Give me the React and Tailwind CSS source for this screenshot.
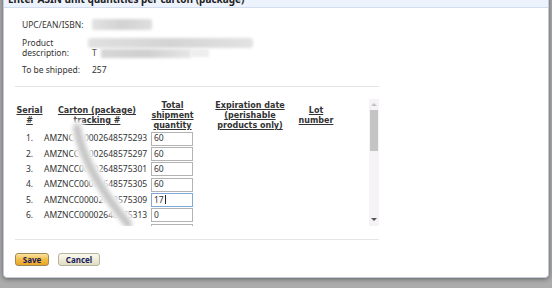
import React from 'react';

const rows = [
    { n: '1.', id: 'AMZNCC00002648575293', qty: '60' },
    { n: '2.', id: 'AMZNCC00002648575297', qty: '60' },
    { n: '3.', id: 'AMZNCC00002648575301', qty: '60' },
    { n: '4.', id: 'AMZNCC00002648575305', qty: '60' },
    { n: '5.', id: 'AMZNCC00002648575309', qty: '17', focused: true },
    { n: '6.', id: 'AMZNCC00002648575313', qty: '0' },
    // only the top edge of row 7's input shows above the fold
    { n: '', id: '', qty: '' },
];

function HeadCell({ width, children }) {
    return (
        <div className={`flex justify-center ${width}`}>
            <span className="whitespace-nowrap text-center underline">{children}</span>
        </div>
    );
}

export default function App() {
    return (
        <div className="h-[288px] w-[552px] overflow-hidden bg-[#acacac] font-['Noto_Sans',sans-serif] text-[8.5px] text-[#333]">
            <div className="ml-[3px] mt-[-17px] w-[546px] rounded-b-[4px] border border-[#c3cbd6] bg-white shadow-[0_1px_5px_rgba(0,0,0,0.45)]">
                {/* Title bar (mostly scrolled off the top) */}
                <div className="h-[24px] border-b border-[#d2def0] bg-[#edf3fc] pl-[4px] pt-[10px] text-[10px] font-bold leading-[11px] text-[#222]">
                    Enter ASIN unit quantities per carton (package)
                </div>

                <div className="pl-[11px] pt-[12px] pb-[11px]">
                    {/* Product info */}
                    <div className="pl-[7px] leading-[10px]">
                        <div className="flex h-[10px]">
                            <div className="w-[70px]">UPC/EAN/ISBN:</div>
                            <div className="mt-[-1px] h-[11px] w-[60px] rounded-[2px] bg-gradient-to-r from-[#e2e2e2] via-[#d2d2d2] to-[#dedede] blur-[1.5px]" />
                        </div>
                        <div className="mt-[8px] flex h-[20px]">
                            <div className="w-[70px]">Product<br />description:</div>
                            <div className="ml-[-4px] flex flex-col">
                                <div className="h-[10px] w-[165px] rounded-[3px] bg-gradient-to-r from-[#e0e0e0] via-[#d4d4d4] to-[#e2e2e2] blur-[1.5px]" />
                                <div className="flex h-[10px] items-center">
                                    <span className="ml-[4px] mr-[4px] text-[#444]">T</span>
                                    <div className="h-[9px] w-[90px] bg-gradient-to-r from-[#d6d6d6] via-[#cfcfcf] to-[#e6e6e6] blur-[1.5px]" />
                                    <div className="h-[8px] w-[18px] bg-[#eeeeee] blur-[1px]" />
                                </div>
                            </div>
                        </div>
                        <div className="mt-[7px] flex h-[10px]">
                            <div className="w-[70px]">To be shipped:</div>
                            <div>257</div>
                        </div>
                    </div>

                    <div className="mt-[11px] h-px w-[364px] bg-[#e3e3e3]" />

                    {/* Carton table */}
                    <div className="relative mt-[12px] flex h-[127px] w-[364px]">
                        <div className="w-[354px] overflow-hidden pt-[2px]">
                            <div className="flex h-[30px] items-center font-['DejaVu_Sans',sans-serif] text-[8px] font-bold leading-[10px] text-[#333]">
                                <HeadCell width="w-[29px]">Serial<br />#</HeadCell>
                                <HeadCell width="w-[106px]">Carton (package)<br />tracking #</HeadCell>
                                <HeadCell width="w-[45px]">Total<br />shipment<br />quantity</HeadCell>
                                <HeadCell width="w-[110px]">Expiration date<br />(perishable<br />products only)</HeadCell>
                                <HeadCell width="w-[22px]">Lot<br />number</HeadCell>
                            </div>
                            {rows.map((row, i) => (
                                <div key={i} className="flex h-[15.33px] items-center">
                                    <div className="w-[29px] text-center">{row.n}</div>
                                    <div className="w-[106px] whitespace-nowrap">{row.id}</div>
                                    <div className="w-[45px] pl-[1px]">
                                        <div className={`flex h-[14px] w-[42px] items-center border bg-white pl-[2px] leading-none ${row.focused ? 'border-[#7fa9da]' : 'border-[#b3b3b3]'}`}>
                                            {row.qty}
                                            {row.focused && <span className="ml-[1px] h-[9px] w-px bg-[#222]" />}
                                        </div>
                                    </div>
                                </div>
                            ))}
                        </div>

                        {/* Scrollbar */}
                        <div className="flex w-[10px] flex-col items-center bg-[#f6f3f6]">
                            <div className="mt-[4px] h-0 w-0 border-x-[3px] border-b-[3px] border-x-transparent border-b-[#c2c2c2]" />
                            <div className="mt-[4px] h-[41px] w-[8px] bg-[#c4c4c4]" />
                            <div className="flex-1" />
                            <div className="mb-[5px] h-0 w-0 border-x-[3px] border-t-[3px] border-x-transparent border-t-[#555]" />
                        </div>

                        {/* Redaction smear */}
                        <svg className="pointer-events-none absolute left-0 top-0" width="200" height="127">
                            <defs>
                                <filter id="soft" x="-20%" y="-20%" width="140%" height="140%">
                                    <feGaussianBlur stdDeviation="2" />
                                </filter>
                            </defs>
                            <path d="M62 29 Q69 71 113 125" stroke="#ffffff" strokeWidth="16" strokeLinecap="round" fill="none" filter="url(#soft)" />
                            <path d="M62 29 Q69 71 113 125" stroke="#c6c6c6" strokeWidth="8" strokeLinecap="round" fill="none" filter="url(#soft)" />
                        </svg>
                    </div>

                    <div className="mt-[13px] h-px w-[364px] bg-[#e6e6e6]" />

                    {/* Buttons */}
                    <div className="mt-[13px] flex gap-[9px] font-bold text-[8px] text-[#1b1b5c]">
                        <button className="flex h-[13px] w-[34px] items-center justify-center rounded-[3px] border border-[#9c8a5a] bg-gradient-to-b from-[#fbe39c] via-[#f2bd45] to-[#e9a420] leading-none">
                            Save
                        </button>
                        <button className="flex h-[13px] w-[42px] items-center justify-center rounded-[3px] border border-[#b8b39c] bg-gradient-to-b from-[#fbfaef] to-[#e1ddc2] leading-none">
                            Cancel
                        </button>
                    </div>
                </div>
            </div>
        </div>
    );
}
